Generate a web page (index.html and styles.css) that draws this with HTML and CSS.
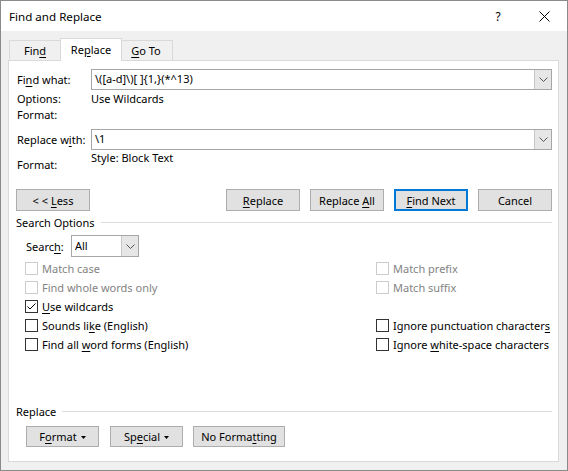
FILE: index.html
```html
<!DOCTYPE html>
<html>
<head>
<meta charset="utf-8">
<title>Find and Replace</title>
<link rel="stylesheet" href="styles.css">
</head>
<body>
<div class="window">
  <div class="titlebar">
    <div class="title">Find and Replace</div>
    <div class="tb-btn help">?</div>
    <div class="tb-btn close">
      <svg width="11" height="11" viewBox="0 0 11 11"><path d="M0.5 0.5 L10.5 10.5 M10.5 0.5 L0.5 10.5" stroke="#000" stroke-width="1" fill="none"/></svg>
    </div>
  </div>
  <div class="content">
    <div class="tabs">
      <div class="tab tab-find"><span>Fin<u>d</u></span></div>
      <div class="tab tab-active"><span>Re<u>p</u>lace</span></div>
      <div class="tab tab-goto"><span><u>G</u>o To</span></div>
    </div>
    <div class="panel">
      <div class="field-row first">
        <div class="lbl">Fi<u>n</u>d what:</div>
        <div class="combo">
          <div class="combo-val">\([a-d]\)[ ]{1,}(*^13)</div>
          <div class="combo-drop"><svg width="9" height="5" viewBox="0 0 9 5"><path d="M0.5 0.5 L4.5 4.5 L8.5 0.5" stroke="#555" fill="none"/></svg></div>
        </div>
      </div>
      <div class="info-row opt">
        <div class="lbl">Options:</div>
        <div class="val">Use Wildcards</div>
      </div>
      <div class="info-row fmt">
        <div class="lbl">Format:</div>
      </div>
      <div class="field-row second">
        <div class="lbl">Replace w<u>i</u>th:</div>
        <div class="combo">
          <div class="combo-val">\1</div>
          <div class="combo-drop"><svg width="9" height="5" viewBox="0 0 9 5"><path d="M0.5 0.5 L4.5 4.5 L8.5 0.5" stroke="#555" fill="none"/></svg></div>
        </div>
      </div>
      <div class="info-row fmt2">
        <div class="lbl lbl-low">Format:</div>
        <div class="val">Style: Block Text</div>
      </div>
      <div class="btn-row">
        <div class="btn"><span>&lt; &lt; <u>L</u>ess</span></div>
        <div class="spacer"></div>
        <div class="btn-group">
          <div class="btn"><span><u>R</u>eplace</span></div>
          <div class="btn"><span>Replace <u>A</u>ll</span></div>
          <div class="btn btn-default"><span><u>F</u>ind Next</span></div>
          <div class="btn"><span>Cancel</span></div>
        </div>
      </div>
      <div class="legend legend-search">
        <span>Search Options</span>
        <div class="rule"></div>
      </div>
      <div class="search-row">
        <div class="search-lbl">Searc<u>h</u>:</div>
        <div class="select">
          <div class="select-val">All</div>
          <div class="select-drop"><svg width="9" height="5" viewBox="0 0 9 5"><path d="M0.5 0.5 L4.5 4.5 L8.5 0.5" stroke="#555" fill="none"/></svg></div>
        </div>
      </div>
      <div class="checks">
        <div class="check disabled"><span class="box"></span><span class="txt">Match case</span></div>
        <div class="check disabled"><span class="box"></span><span class="txt">Match prefix</span></div>
        <div class="check disabled"><span class="box"></span><span class="txt">Find whole words only</span></div>
        <div class="check disabled"><span class="box"></span><span class="txt">Match suffix</span></div>
        <div class="check"><span class="box"><svg width="11" height="11" viewBox="0 0 11 11"><path d="M1.5 5.5 L4 8 L9.5 2.5" stroke="#000" stroke-width="1" fill="none"/></svg></span><span class="txt"><u>U</u>se wildcards</span></div>
        <div></div>
        <div class="check"><span class="box"></span><span class="txt">Sounds li<u>k</u>e (English)</span></div>
        <div class="check"><span class="box"></span><span class="txt">Ignore punctuation character<u>s</u></span></div>
        <div class="check"><span class="box"></span><span class="txt">Find all <u>w</u>ord forms (English)</span></div>
        <div class="check"><span class="box"></span><span class="txt">Ignore <u>w</u>hite-space characters</span></div>
      </div>
      <div class="legend legend-replace">
        <span>Replace</span>
        <div class="rule"></div>
      </div>
      <div class="bottom-row">
        <div class="btn btn-fmt"><span>F<u>o</u>rmat</span><svg class="tri" width="5" height="3" viewBox="0 0 5 3"><path d="M0 0 H5 L2.5 3 Z" fill="#000"/></svg></div>
        <div class="btn btn-spc"><span>Sp<u>e</u>cial</span><svg class="tri" width="5" height="3" viewBox="0 0 5 3"><path d="M0 0 H5 L2.5 3 Z" fill="#000"/></svg></div>
        <div class="btn btn-nofmt"><span>No Forma<u>t</u>ting</span></div>
      </div>
    </div>
  </div>
</div>
</body>
</html>
```

FILE: styles.css
```css
* { box-sizing: border-box; }
html, body { margin: 0; padding: 0; }
body {
  width: 568px;
  height: 471px;
  font-family: "Noto Sans", "Segoe UI", "Liberation Sans", sans-serif;
  font-size: 11px;
  color: #000;
  background: #fff;
  overflow: hidden;
}
u { text-decoration: underline; text-underline-offset: 2px; }

.window {
  width: 568px;
  height: 471px;
  border: 1px solid #8a8a8a;
  background: #f0f0f0;
  display: flex;
  flex-direction: column;
}
.titlebar {
  height: 30px;
  flex-shrink: 0;
  background: #fff;
  display: flex;
  align-items: center;
}
.title { flex: 1; padding-left: 8px; padding-top: 1px; font-size: 11.6px; }
.tb-btn {
  width: 46px;
  height: 30px;
  display: flex;
  align-items: center;
  justify-content: center;
}
.help { font-size: 12px; }
.close { padding-top: 1px; }

.content {
  padding: 7px 8px 0 7px;
}
.tabs {
  height: 22px;
  display: flex;
  align-items: flex-end;
  padding-left: 1px;
}
.tab {
  height: 20px;
  border: 1px solid #d9d9d9;
  border-bottom: none;
  background: #f0f0f0;
  display: flex;
  align-items: center;
  justify-content: center;
  padding-bottom: 1px;
  white-space: nowrap;
}
.tab-find { width: 51px; border-right: none; }
.tab-goto { width: 51px; border-left: none; padding-right: 2px; }
.tab-active {
  width: 62px;
  height: 23px;
  margin-bottom: -1px;
  background: #fff;
  position: relative;
  z-index: 1;
  padding-bottom: 2px;
}

.panel {
  width: 551px;
  height: 402px;
  background: #fff;
  border: 1px solid #d9d9d9;
}

.field-row {
  display: flex;
  align-items: center;
  margin-left: 8px;
  height: 21px;
}
.field-row.first { margin-top: 8px; }
.field-row.second { margin-top: 6px; }
.lbl { width: 74px; flex-shrink: 0; white-space: nowrap; }
.val { white-space: nowrap; }
.combo {
  width: 461px;
  height: 21px;
  border: 1px solid #a6a6a6;
  display: flex;
  background: #fff;
}
.combo-val { flex: 1; padding-left: 3px; line-height: 18px; white-space: pre; }
.combo-drop {
  width: 17px;
  height: 19px;
  background: #e6e6e6;
  border-left: 1px solid #c8c8c8;
  display: flex;
  align-items: center;
  justify-content: center;
}

.info-row {
  display: flex;
  margin-left: 8px;
  line-height: 16px;
}
.info-row.opt { height: 17px; padding-top: 1px; }
.info-row.fmt { height: 16px; }
.info-row.fmt2 { height: 23px; }
.lbl-low { padding-top: 7px; }

.btn {
  height: 22px;
  width: 74px;
  border: 1px solid #adadad;
  background: #e1e1e1;
  display: flex;
  align-items: center;
  justify-content: center;
  white-space: nowrap;
}
.btn-default { border: 2px solid #0078d7; }
.btn-row {
  display: flex;
  margin: 16px 6px 0 7px;
}
.spacer { flex: 1; }
.btn-group { display: flex; gap: 10px; }

.legend {
  display: flex;
  align-items: center;
  margin-left: 7px;
  margin-right: 6px;
  height: 16px;
}
.legend .rule {
  flex: 1;
  height: 1px;
  background: #dcdcdc;
  margin-left: 6px;
}
.legend-search { margin-top: 3px; }
.legend-replace { margin-top: 49px; }

.search-row {
  display: flex;
  align-items: center;
  margin: 5px 0 0 17px;
  height: 22px;
}
.search-lbl { width: 45px; white-space: nowrap; }
.select {
  width: 68px;
  height: 22px;
  border: 1px solid #a6a6a6;
  display: flex;
}
.select-val { flex: 1; padding-left: 3px; line-height: 20px; }
.select-drop {
  width: 17px;
  height: 20px;
  background: #e6e6e6;
  border-left: 1px solid #c8c8c8;
  display: flex;
  align-items: center;
  justify-content: center;
}

.checks {
  display: grid;
  grid-template-columns: 351px 1fr;
  grid-auto-rows: 19px;
  margin: 2px 0 0 16px;
}
.check {
  display: flex;
  align-items: center;
  gap: 4px;
  white-space: nowrap;
}
.box {
  width: 13px;
  height: 13px;
  border: 1px solid #333;
  background: #fff;
  display: flex;
  align-items: center;
  justify-content: center;
  flex-shrink: 0;
}
.check.disabled { color: #838383; }
.check.disabled .box { border-color: #cccccc; }

.bottom-row {
  display: flex;
  margin: 7px 0 0 17px;
}
.bottom-row .btn { height: 21px; gap: 4px; }
.btn-fmt { width: 73px; }
.btn-spc { width: 73px; margin-left: 11px; }
.btn-nofmt { width: 92px; margin-left: 10px; }
.tri { display: block; margin-top: 1px; }
```
